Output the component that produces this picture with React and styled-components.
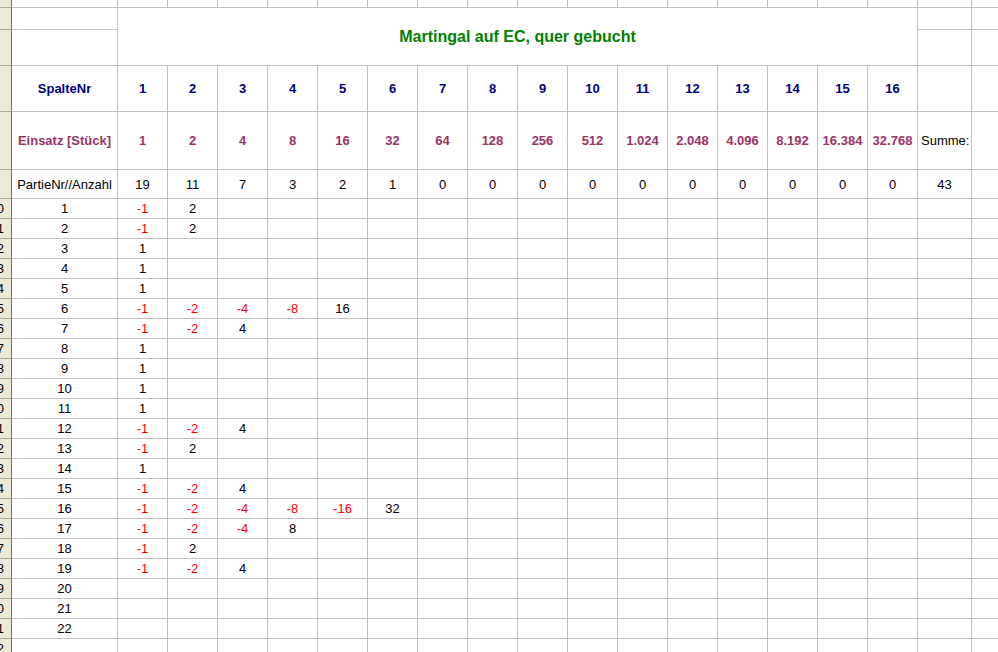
import React from "react";
import styled, { createGlobalStyle } from "styled-components";

const GlobalStyle = createGlobalStyle`
  html, body {
    margin: 0;
    padding: 0;
    background: #ffffff;
    overflow: hidden;
  }
  body {
    font-family: "Liberation Sans", Arial, sans-serif;
    font-size: 13px;
  }
`;

const Sheet = styled.div`
  display: grid;
  grid-template-columns: 12px 106px repeat(16, 50px) 54px 60px;
  grid-template-rows: 8px 22px 36px 46px 58px 29px repeat(23, 20px);
  width: 998px;
  height: 652px;
  overflow: hidden;
  background: #ffffff;
  font-family: "Liberation Sans", Arial, sans-serif;
  font-size: 13px;
  color: #000000;
`;

const tones = {
  black: "#000000",
  navy: "#000080",
  purple: "#993366",
  red: "#ff0000",
  green: "#008000",
};

const Cell = styled.div`
  box-sizing: border-box;
  border-right: 1px solid #c0c0c0;
  border-bottom: 1px solid #c0c0c0;
  display: flex;
  align-items: center;
  justify-content: ${(p) => (p.$left ? "flex-start" : "center")};
  padding-left: ${(p) => (p.$left ? "3px" : "0")};
  overflow: hidden;
  white-space: nowrap;
  color: ${(p) => tones[p.$tone || "black"]};
  font-weight: ${(p) => (p.$bold ? 700 : 400)};
  line-height: 1;
`;

const TitleCell = styled(Cell)`
  grid-column: 3 / span 16;
  grid-row: 2 / span 2;
  font-size: 16px;
  font-weight: 700;
  color: #008000;
`;

/* Row number column, scrolled so only the right edge of each number shows */
const RowHead = styled.div`
  box-sizing: border-box;
  background: #ece9d8;
  border-right: 1px solid #716f64;
  border-bottom: 1px solid #aca899;
  overflow: hidden;
  white-space: nowrap;
  direction: rtl;
  padding-right: 7px;
  display: flex;
  align-items: center;
  font-size: 13px;
  color: #000000;
  line-height: 1;
`;

const einsatz = [
  "1", "2", "4", "8", "16", "32", "64", "128", "256", "512",
  "1.024", "2.048", "4.096", "8.192", "16.384", "32.768",
];

const counts = [19, 11, 7, 3, 2, 1, 0, 0, 0, 0, 0, 0, 0, 0, 0, 0];

const games = [
  [-1, 2],
  [-1, 2],
  [1],
  [1],
  [1],
  [-1, -2, -4, -8, 16],
  [-1, -2, 4],
  [1],
  [1],
  [1],
  [1],
  [-1, -2, 4],
  [-1, 2],
  [1],
  [-1, -2, 4],
  [-1, -2, -4, -8, -16, 32],
  [-1, -2, -4, 8],
  [-1, 2],
  [-1, -2, 4],
  [],
  [],
  [],
  null,
];

const cols16 = Array.from({ length: 16 }, (_, i) => i);

function EmptyRow({ k }) {
  return (
    <>
      <RowHead />
      <Cell />
      {cols16.map((i) => (
        <Cell key={`${k}-${i}`} />
      ))}
      <Cell />
      <Cell />
    </>
  );
}

export default function App() {
  return (
    <>
      <GlobalStyle />
      <Sheet>
        {/* row 0 (partly visible) */}
        <EmptyRow k="r0" />

        {/* title rows */}
        <TitleCell>Martingal auf EC, quer gebucht</TitleCell>
        <RowHead />
        <Cell />
        <Cell />
        <Cell />
        <RowHead />
        <Cell />
        <Cell />
        <Cell />

        {/* Spalte numbers */}
        <RowHead />
        <Cell $tone="navy" $bold>SpalteNr</Cell>
        {cols16.map((i) => (
          <Cell key={`n${i}`} $tone="navy" $bold>
            {i + 1}
          </Cell>
        ))}
        <Cell />
        <Cell />

        {/* Einsatz */}
        <RowHead />
        <Cell $tone="purple" $bold>Einsatz [Stück]</Cell>
        {einsatz.map((v, i) => (
          <Cell key={`e${i}`} $tone="purple" $bold>
            {v}
          </Cell>
        ))}
        <Cell $left>Summe:</Cell>
        <Cell />

        {/* counts */}
        <RowHead />
        <Cell>PartieNr//Anzahl</Cell>
        {counts.map((v, i) => (
          <Cell key={`c${i}`}>{v}</Cell>
        ))}
        <Cell>43</Cell>
        <Cell />

        {/* games */}
        {games.map((g, r) => (
          <React.Fragment key={`g${r}`}>
            <RowHead>{10 + r}</RowHead>
            <Cell>{g ? r + 1 : ""}</Cell>
            {cols16.map((i) => {
              const v = g ? g[i] : undefined;
              return (
                <Cell key={`g${r}-${i}`} $tone={v < 0 ? "red" : "black"}>
                  {v !== undefined ? v : ""}
                </Cell>
              );
            })}
            <Cell />
            <Cell />
          </React.Fragment>
        ))}
      </Sheet>
    </>
  );
}
